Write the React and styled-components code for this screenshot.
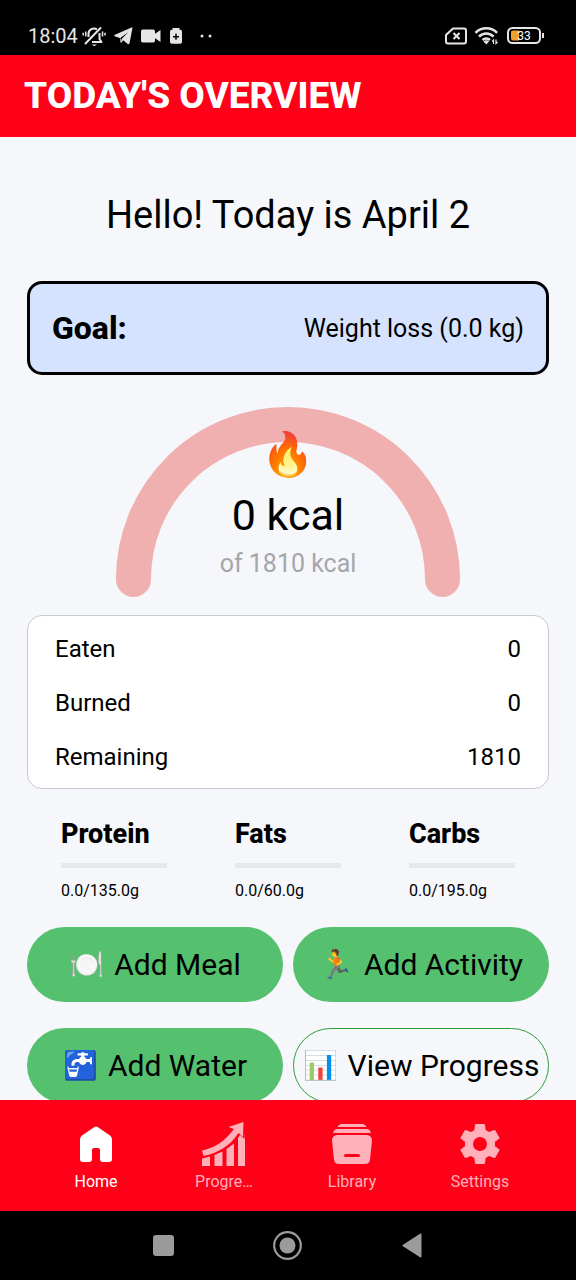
import React from "react";
import styled, { createGlobalStyle } from "styled-components";

const GlobalStyle = createGlobalStyle`
  *, *::before, *::after { box-sizing: border-box; }
  body {
    margin: 0;
    background: #f6f7fb;
    color: #000;
    font-family: Roboto, "Liberation Sans", sans-serif;
  }
  h1, h2, p, dl, dd, dt { margin: 0; font-weight: 400; }
`;

const Screen = styled.div`
  display: flex;
  flex-direction: column;
  height: 100vh;
`;

const StatusBar = styled.div`
  display: flex;
  flex: none;
  align-items: center;
  justify-content: space-between;
  height: 55px;
  padding: 16px 32px 0 28px;
  background: #000;
  color: #e6e6e6;
  font-size: 20px;
`;

const StatusGroup = styled.div`
  display: flex;
  align-items: center;
  gap: ${(p) => p.$gap}px;
`;

const AppBar = styled.header`
  display: flex;
  flex: none;
  align-items: center;
  height: 82px;
  padding: 0 24px;
  background: #ff0019;
`;

const Title = styled.h1`
  color: #fff;
  font-size: 37px;
  line-height: 44px;
  font-weight: 800;
`;

const Content = styled.main`
  display: flex;
  flex: 1;
  flex-direction: column;
  min-height: 0;
  padding: 52px 27px 0;
  overflow-y: auto;
  scrollbar-width: none;
`;

const Greeting = styled.p`
  flex: none;
  margin-bottom: 40px;
  font-size: 38px;
  line-height: 52px;
  text-align: center;
`;

const GoalCard = styled.section`
  display: flex;
  flex: none;
  align-items: center;
  justify-content: space-between;
  height: 94px;
  padding: 0 22px;
  border: 3px solid #000;
  border-radius: 15px;
  background: #d6e3ff;
`;

const GoalLabel = styled.h2`
  font-size: 32px;
  font-weight: 800;
`;

const GoalValue = styled.p`
  font-size: 25px;
`;

const Gauge = styled.section`
  display: grid;
  flex: none;
  justify-items: center;
  margin: 32px 0 18px;
`;

const GaugeArc = styled.svg`
  display: block;
  grid-area: 1 / 1;
`;

const GaugeText = styled.div`
  display: flex;
  grid-area: 1 / 1;
  flex-direction: column;
  align-items: center;
  padding-top: 19px;
`;

const Flame = styled.span`
  font-size: 43px;
  line-height: 56px;
`;

const GaugeValue = styled.p`
  font-size: 43px;
  line-height: 66px;
`;

const GaugeTarget = styled.p`
  color: #a5a6aa;
  font-size: 25px;
  line-height: 32px;
`;

const Summary = styled.dl`
  display: flex;
  flex: none;
  flex-direction: column;
  padding: 6px 27px 4px;
  border: 1px solid #c9cacf;
  border-radius: 15px;
  background: #fff;
`;

const SummaryRow = styled.div`
  display: flex;
  align-items: center;
  justify-content: space-between;
  height: 54px;
  font-size: 24px;
`;

const Macros = styled.section`
  display: grid;
  flex: none;
  grid-template-columns: repeat(3, 1fr);
  padding-top: 29px;
`;

const Macro = styled.div`
  padding: 0 34px;
`;

const MacroName = styled.h2`
  font-size: 27px;
  line-height: 32px;
  font-weight: 800;
`;

const MacroTrack = styled.div`
  height: 5px;
  margin: 13px 0;
  border-radius: 1px;
  background: #e7e8ea;
`;

const MacroAmount = styled.p`
  font-size: 16px;
  line-height: 20px;
  white-space: nowrap;
`;

const Actions = styled.section`
  display: grid;
  flex: none;
  grid-template-columns: 1fr 1fr;
  gap: 26px 10px;
  padding: 26px 0;
`;

const ActionButton = styled.button`
  display: flex;
  align-items: center;
  justify-content: center;
  gap: 10px;
  height: 75px;
  padding: 0;
  border: ${(p) => (p.$outlined ? "1px solid #2f9e3a" : "0")};
  border-radius: 38px;
  background: ${(p) => (p.$outlined ? "transparent" : "#55c16f")};
  color: #000;
  font-family: inherit;
  font-size: 30px;
  white-space: nowrap;
`;

const ActionEmoji = styled.span`
  font-size: 28px;
`;

const TabBar = styled.nav`
  display: grid;
  flex: none;
  grid-template-columns: repeat(4, 1fr);
  height: 111px;
  padding: 20px 32px 0;
  background: #ff0019;
`;

const Tab = styled.a`
  display: flex;
  flex-direction: column;
  align-items: center;
  gap: 4px;
  color: ${(p) => (p.$active ? "#fff" : "#ffb0b8")};
  font-size: 16px;
  line-height: 20px;
  text-decoration: none;
`;

const SystemBar = styled.div`
  display: flex;
  flex: none;
  align-items: center;
  justify-content: center;
  gap: 94px;
  height: 69px;
  background: #000;
`;

const SystemButton = styled.button`
  display: flex;
  padding: 0;
  border: 0;
  background: none;
`;

const MutedBell = () => (
  <svg width="24" height="22" viewBox="0 0 24 22" fill="none" stroke="#e6e6e6" strokeWidth="2">
    <path d="M6.500 12V9a5.500 5.500 0 0 1 8.500-4.600M17.500 8v6l2 3H10" strokeLinejoin="round" />
    <path d="M3.500 18.500L18.500 3" strokeLinecap="round" />
    <path d="M9.500 19.500h5.500l-2.700 1.800z" fill="#e6e6e6" stroke="none" />
    <path d="M3.800 6.500v5M1.200 7.800v2.600M20.500 6.500v5M23 7.800v2.600" strokeWidth="1.500" />
  </svg>
);

const PaperPlane = () => (
  <svg width="19" height="18" viewBox="0 0 19 18" fill="#e6e6e6">
    <path d="M18.500.800L15.500 16.200c-.2 1-.9 1.200-1.700.8L9.200 13.200l-2.400 3-1-5.200L.8 9.200c-1-.4-1-1 .2-1.500L17.500.600c.7-.3 1.100-.3 1 .2z" />
    <path d="M6.300 11L14 5.200l-6.300 6.900-.6 2" fill="#000" />
  </svg>
);

const VideoCamera = () => (
  <svg width="20" height="14" viewBox="0 0 20 14" fill="#e6e6e6">
    <rect width="14" height="13" y="0.500" rx="1.800" />
    <path d="M13 5.500L19.500 1v12L13 8.500z" />
  </svg>
);

const BatterySaver = () => (
  <svg width="14" height="16" viewBox="0 0 14 16">
    <path d="M3.500 0h7v2h-7z" fill="#e6e6e6" />
    <rect x="1" y="1.800" width="12" height="14" rx="1.800" fill="#e6e6e6" />
    <path d="M7 5.800v6M4 8.800h6" stroke="#000" strokeWidth="1.500" />
  </svg>
);

const MoreDots = () => (
  <svg width="14" height="4" viewBox="0 0 14 4" fill="#e6e6e6">
    <circle cx="3" cy="2" r="1.500" />
    <circle cx="11" cy="2" r="1.500" />
  </svg>
);

const NoSim = () => (
  <svg width="22" height="18" viewBox="0 0 22 18" fill="none" stroke="#e6e6e6" strokeWidth="2">
    <path d="M8 1.500h11a2 2 0 0 1 2 2v11a2 2 0 0 1-2 2H3a2 2 0 0 1-2-2V8z" strokeLinejoin="round" />
    <path d="M8.500 6l6 6M14.500 6l-6 6" />
  </svg>
);

const Wifi = () => (
  <svg width="26" height="19" viewBox="0 0 26 19" fill="none" stroke="#e6e6e6" strokeWidth="2.600">
    <path d="M1.500 6.800a15 15 0 0 1 21.600 0M5 10.600a10 10 0 0 1 14.600 0M8.600 14a5.500 5.500 0 0 1 7.400 0" />
    <path d="M9.500 15.500a4 4 0 0 1 5.600 0l-2.800 3z" fill="#e6e6e6" stroke="none" />
    <path d="M19.500 18v-4l-1.300 1.500M22 13.500v4l1.500-1.500" strokeWidth="1.200" />
  </svg>
);

const Battery = () => (
  <svg width="37" height="17" viewBox="0 0 37 17">
    <rect x="1" y="1" width="32" height="15" rx="4.500" fill="none" stroke="#e6e6e6" strokeWidth="2" />
    <path d="M6 3.500h6v10H6a2 2 0 0 1-2-2v-6a2 2 0 0 1 2-2z" fill="#eda02c" />
    <path d="M36 6v5" stroke="#e6e6e6" strokeWidth="2" />
    <text x="17" y="13" fill="#fff" fontSize="12" textAnchor="middle">33</text>
  </svg>
);

const HomeIcon = () => (
  <svg width="48" height="48" viewBox="0 0 48 48" fill="currentColor">
    <path d="M22 7.200a3.500 3.500 0 0 1 4 0L38 15.500a5 5 0 0 1 2 4V39a3 3 0 0 1-3 3h-6a3 3 0 0 1-3-3V30a2 2 0 0 0-2-2h-4a2 2 0 0 0-2 2v9a3 3 0 0 1-3 3h-6a3 3 0 0 1-3-3V19.500a5 5 0 0 1 2-4z" />
  </svg>
);

const ProgressIcon = () => (
  <svg width="48" height="48" viewBox="0 0 48 48" fill="currentColor">
    <path d="M2 38.500l8-2V46H2zM14.500 35l8-3.500V46h-8zM26.500 29l7.500-5.500V46h-7.500zM38 18l2-3 4.500 4 .5-6V46h-7z" />
    <path d="M2 30.500C15 28 25 21 34 9l-5.500-2L43.500 2l-.5 15-4.500-4C30 26 18 33 3.500 36z" />
  </svg>
);

const LibraryIcon = () => (
  <svg width="48" height="48" viewBox="0 0 48 48" fill="currentColor">
    <path d="M14 4h20a5 5 0 0 1 4.500 3h-29A5 5 0 0 1 14 4zM10 9h28a5 5 0 0 1 5 4H5a5 5 0 0 1 5-4z" />
    <path
      fillRule="evenodd"
      d="M9 15h30a5 5 0 0 1 5 5.500l-2 19a5 5 0 0 1-5 4.500H11a5 5 0 0 1-5-4.500l-2-19A5 5 0 0 1 9 15zm8.500 19a1.500 1.500 0 0 0 0 3h13a1.500 1.500 0 0 0 0-3z"
    />
  </svg>
);

const SettingsIcon = () => (
  <svg width="48" height="48" viewBox="0 0 24 24" fill="currentColor">
    <path d="M19.430 12.980c.04-.32.07-.64.07-.98s-.03-.66-.07-.98l2.110-1.650c.19-.15.24-.42.12-.64l-2-3.460c-.12-.22-.39-.3-.61-.22l-2.490 1c-.52-.4-1.080-.73-1.690-.98l-.38-2.650C14.460 2.180 14.250 2 14 2h-4c-.25 0-.46.18-.49.42l-.38 2.650c-.61.25-1.170.59-1.690.98l-2.490-1c-.23-.09-.49 0-.61.22l-2 3.460c-.13.22-.07.49.12.64l2.110 1.650c-.04.32-.07.65-.07.98s.03.66.07.98l-2.110 1.650c-.19.15-.24.42-.12.64l2 3.460c.12.22.39.3.61.22l2.490-1c.52.4 1.080.73 1.690.98l.38 2.650c.03.24.24.42.49.42h4c.25 0 .46-.18.49-.42l.38-2.650c.61-.25 1.170-.59 1.690-.98l2.490 1c.23.09.49 0 .61-.22l2-3.460c.12-.22.07-.49-.12-.64l-2.110-1.650zM12 15.500a3.500 3.500 0 1 1 0-7 3.500 3.500 0 0 1 0 7z" />
  </svg>
);

const summary = [
  ["Eaten", "0"],
  ["Burned", "0"],
  ["Remaining", "1810"],
];

const macros = [
  ["Protein", "0.0/135.0g"],
  ["Fats", "0.0/60.0g"],
  ["Carbs", "0.0/195.0g"],
];

const actions = [
  { emoji: "🍽️", label: "Add Meal" },
  { emoji: "🏃", label: "Add Activity" },
  { emoji: "🚰", label: "Add Water" },
  { emoji: "📊", label: "View Progress", outlined: true },
];

const tabs = [
  { label: "Home", Icon: HomeIcon, active: true },
  { label: "Progre…", Icon: ProgressIcon },
  { label: "Library", Icon: LibraryIcon },
  { label: "Settings", Icon: SettingsIcon },
];

export default function App() {
  return (
    <Screen>
      <GlobalStyle />
      <StatusBar>
        <StatusGroup $gap={8}>
          <StatusGroup $gap={4}>
            <span>18:04</span>
            <MutedBell />
          </StatusGroup>
          <PaperPlane />
          <VideoCamera />
          <StatusGroup $gap={16}>
            <BatterySaver />
            <MoreDots />
          </StatusGroup>
        </StatusGroup>
        <StatusGroup $gap={7}>
          <NoSim />
          <Wifi />
          <Battery />
        </StatusGroup>
      </StatusBar>
      <AppBar>
        <Title>TODAY'S OVERVIEW</Title>
      </AppBar>
      <Content>
        <Greeting>Hello! Today is April 2</Greeting>
        <GoalCard>
          <GoalLabel>Goal:</GoalLabel>
          <GoalValue>Weight loss (0.0 kg)</GoalValue>
        </GoalCard>
        <Gauge>
          <GaugeArc width="346" height="190" viewBox="0 0 346 190">
            <path
              d="M18.500 172.500V172a154.500 154.500 0 0 1 309 0v.5"
              fill="none"
              stroke="#f0b0b0"
              strokeWidth="35"
              strokeLinecap="round"
            />
          </GaugeArc>
          <GaugeText>
            <Flame>🔥</Flame>
            <GaugeValue>0 kcal</GaugeValue>
            <GaugeTarget>of 1810 kcal</GaugeTarget>
          </GaugeText>
        </Gauge>
        <Summary>
          {summary.map(([name, value]) => (
            <SummaryRow key={name}>
              <dt>{name}</dt>
              <dd>{value}</dd>
            </SummaryRow>
          ))}
        </Summary>
        <Macros>
          {macros.map(([name, amount]) => (
            <Macro key={name}>
              <MacroName>{name}</MacroName>
              <MacroTrack />
              <MacroAmount>{amount}</MacroAmount>
            </Macro>
          ))}
        </Macros>
        <Actions>
          {actions.map(({ emoji, label, outlined }) => (
            <ActionButton key={label} type="button" $outlined={outlined}>
              <ActionEmoji>{emoji}</ActionEmoji>
              {label}
            </ActionButton>
          ))}
        </Actions>
      </Content>
      <TabBar>
        {tabs.map(({ label, Icon, active }) => (
          <Tab key={label} href="#" $active={active}>
            <Icon />
            {label}
          </Tab>
        ))}
      </TabBar>
      <SystemBar>
        <SystemButton type="button" aria-label="Recent apps">
          <svg width="30" height="30" viewBox="0 0 30 30" fill="#9b9b9b">
            <rect x="4" y="4" width="21" height="21" rx="3" />
          </svg>
        </SystemButton>
        <SystemButton type="button" aria-label="Home screen">
          <svg width="30" height="30" viewBox="0 0 30 30" fill="#9b9b9b">
            <circle cx="14.500" cy="14.500" r="13.300" fill="none" stroke="#9b9b9b" strokeWidth="2.200" />
            <circle cx="14.500" cy="14.500" r="8" />
          </svg>
        </SystemButton>
        <SystemButton type="button" aria-label="Back">
          <svg width="30" height="30" viewBox="0 0 30 30" fill="#9b9b9b">
            <path d="M6 13.700L23 2.700q1.500-.8 1.500.8v22q0 1.600-1.500.8L6 15.300q-1.200-.8 0-1.600z" />
          </svg>
        </SystemButton>
      </SystemBar>
    </Screen>
  );
}
